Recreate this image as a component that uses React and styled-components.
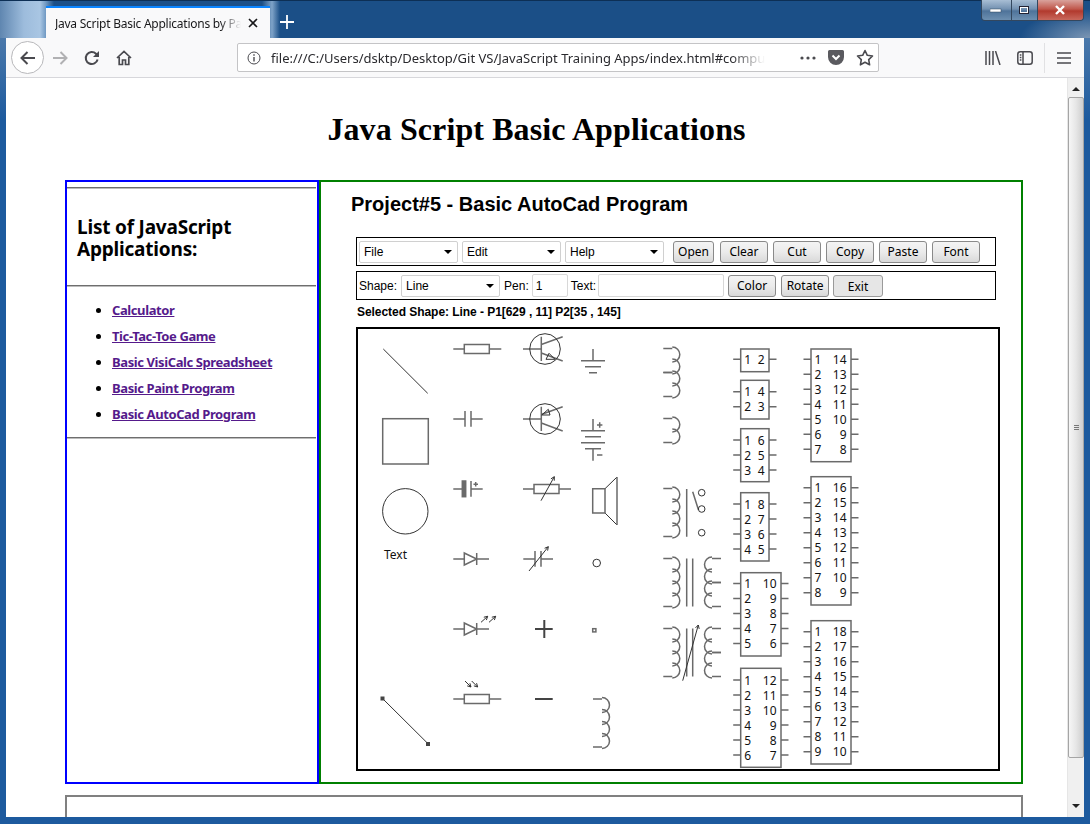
import styled, { createGlobalStyle } from 'styled-components';

const GlobalStyle = createGlobalStyle`
  html, body {
    margin: 0;
    padding: 0;
    height: 100%;
    overflow: hidden;
    background: #1d5a9e;
  }
  * {
    box-sizing: border-box;
  }
`;

const caret = `url("data:image/svg+xml,%3Csvg xmlns='http://www.w3.org/2000/svg' width='8' height='4'%3E%3Cpath d='M0 0h8L4 4z' fill='%23000'/%3E%3C/svg%3E")`;

const Window = styled.div`
  width: 1090px;
  height: 824px;
  display: flex;
  flex-direction: column;
  overflow: hidden;
  background: linear-gradient(#5f86b0, #1d5a9e 120px);
`;

const TitleBar = styled.div`
  height: 38px;
  flex: none;
  display: flex;
  align-items: flex-end;
  padding-left: 46px;
  background:
    radial-gradient(ellipse 70px 30px at 1090px 38px, #7d97b5 0%, rgba(125, 151, 181, 0) 100%),
    linear-gradient(90deg, #5f86b0 0, #9dbcdc 24px, #a9c6e3 40px, #6f98c2 46px, #1b4f87 54px, #1b4f87 262px, #7fa3c8 272px, #1b4f87 280px);
  background-color: #1b4f87;
  border-top: 1px solid #0d2f55;
  position: relative;
`;

const Tab = styled.div`
  width: 224px;
  height: 32px;
  background: #f9f9fa;
  border-top: 2px solid #0a84ff;
  display: flex;
  align-items: center;
  padding: 0 11px 0 9px;
`;

const TabTitle = styled.span`
  flex: 1;
  overflow: hidden;
  white-space: nowrap;
  font: 12px "Noto Sans", sans-serif;
  letter-spacing: -0.25px;
  color: #18181a;
  -webkit-mask-image: linear-gradient(90deg, #000 165px, transparent 186px);
  mask-image: linear-gradient(90deg, #000 165px, transparent 186px);
`;

const NewTab = styled.svg`
  margin: 0 0 9px 10px;
  flex: none;
`;

const WinControls = styled.div`
  position: absolute;
  top: -1px;
  right: 6px;
  width: 103px;
  height: 21px;
  display: flex;
  border: 1px solid #33475e;
  border-top: 0;
  border-radius: 0 0 4px 4px;
  overflow: hidden;
`;

const WinButton = styled.div`
  flex: ${(p) => p.$grow};
  display: flex;
  align-items: center;
  justify-content: center;
  border-right: 1px solid #33475e;
  background: ${(p) =>
    p.$close
      ? 'linear-gradient(#d9a29c, #c0584c 45%, #b23a2e 55%, #c8685c)'
      : 'linear-gradient(#a8bed4, #7391b1 45%, #4e739a 55%, #6d8fb0)'};
  &:last-child {
    border-right: 0;
  }
`;

const Nav = styled.div`
  height: 40px;
  flex: none;
  margin: 0 6px;
  background: #f9f9fa;
  border-bottom: 1px solid #d7d7db;
  display: flex;
  align-items: center;
  padding: 0 4px 0 5px;
`;

const NavButton = styled.div`
  width: ${(p) => (p.$back ? 33 : 32)}px;
  height: 33px;
  flex: none;
  display: flex;
  align-items: center;
  justify-content: center;
  border-radius: 50%;
  background: ${(p) => (p.$back ? '#fff' : 'transparent')};
  border: ${(p) => (p.$back ? '1px solid #b8b8bb' : '0')};
  color: ${(p) => (p.$off ? '#b1b1b3' : '#4a4a4f')};
`;

const UrlBar = styled.div`
  width: 642px;
  height: 29px;
  margin-left: 97px;
  flex: none;
  background: #fff;
  border: 1px solid #c4c4c6;
  border-radius: 2px;
  display: flex;
  align-items: center;
  padding-left: 9px;
  color: #4a4a4f;
`;

const UrlText = styled.span`
  width: 494px;
  margin-left: 10px;
  overflow: hidden;
  white-space: nowrap;
  font: 13px "Noto Sans", sans-serif;
  color: #2a2a2e;
  -webkit-mask-image: linear-gradient(90deg, #000 460px, transparent 494px);
  mask-image: linear-gradient(90deg, #000 460px, transparent 494px);
`;

const UrlIcons = styled.div`
  margin-left: 35px;
  display: flex;
  align-items: center;
  gap: 12px;
`;

const NavRight = styled.div`
  margin-left: auto;
  display: flex;
  align-items: center;
  color: #4a4a4f;
`;

const NavDivider = styled.div`
  width: 1px;
  height: 30px;
  margin: 0 3px;
  background: #e1e1e3;
`;

const Viewport = styled.div`
  flex: 1;
  min-height: 0;
  margin: 0 6px 7px;
  display: flex;
  background: #fff;
`;

const Page = styled.div`
  flex: 1;
  min-width: 0;
  overflow: hidden;
  padding-top: 33px;
`;

const ScrollBar = styled.div`
  width: 17px;
  flex: none;
  background: #f0f0f0;
  display: flex;
  flex-direction: column;
  align-items: center;
  padding-top: 9px;
  border-left: 1px solid #e6e6e6;
`;

const ScrollThumb = styled.div`
  width: 16px;
  height: 661px;
  margin-top: 6px;
  border: 1px solid #a5a5a5;
  border-radius: 2px;
  background: linear-gradient(90deg, #f6f6f6, #e6e6e6 50%, #cfcfcf);
  display: flex;
  align-items: center;
  justify-content: center;
`;

const ScrollArrow = styled.div`
  width: 0;
  height: 0;
  border-left: 4px solid transparent;
  border-right: 4px solid transparent;
  ${(p) => (p.$down ? 'border-top: 4px solid #222; margin-top: 46px;' : 'border-bottom: 4px solid #222;')}
`;

const Heading = styled.h1`
  margin: 0;
  height: 69px;
  font: bold 32px/36px "Liberation Serif", serif;
  letter-spacing: 0.1px;
  color: #000;
  text-align: center;
`;

const Panels = styled.div`
  margin-left: 59px;
  width: 958px;
  height: 604px;
  display: flex;
`;

const Sidebar = styled.aside`
  width: 254px;
  flex: none;
  border: 2px solid #0000ff;
  padding: 5px 1px 0 0;
`;

const Rule = styled.div`
  height: 2px;
  border-top: 1px solid #6e6e6e;
  border-bottom: 1px solid #bcbcbc;
`;

const SideTitle = styled.h3`
  margin: 0;
  height: 96px;
  padding: 27px 10px 0;
  font: bold 19px/22px "Noto Sans", sans-serif;
  letter-spacing: -0.2px;
  color: #000;
`;

const SideList = styled.ul`
  margin: 0;
  height: 150px;
  padding: 10px 0 0 45px;
`;

const SideItem = styled.li`
  height: 26px;
  font: bold 13px/26px "Noto Sans", sans-serif;
  letter-spacing: -0.4px;
  a {
    color: #551a8b;
    text-decoration: underline;
  }
`;

const Main = styled.main`
  flex: 1;
  border: 2px solid #008000;
  padding-left: 30px;
`;

const ProjectTitle = styled.h2`
  margin: 0;
  height: 55px;
  padding-top: 10px;
  font: bold 20px/24px "Liberation Sans", Arial, sans-serif;
  color: #000;
`;

const Toolbar = styled.div`
  width: 640px;
  height: 29px;
  margin: 0 0 5px 5px;
  border: 1px solid #000;
  display: flex;
  align-items: center;
  padding-left: 2px;
  font: 12px "Liberation Sans", Arial, sans-serif;
`;

const Select = styled.select`
  appearance: none;
  width: 99px;
  height: 22px;
  margin-right: ${(p) => p.$gap ?? 4}px;
  padding: 0 0 0 4px;
  border: 1px solid #d0d0d0;
  border-radius: 2px;
  background: #fff ${caret} no-repeat right 5px center;
  font: 12px "Liberation Sans", Arial, sans-serif;
  color: #000;
`;

const Button = styled.button`
  width: ${(p) => p.$w ?? 48}px;
  height: 22px;
  flex: none;
  margin-left: ${(p) => p.$left ?? 5}px;
  margin-top: ${(p) => (p.$flat ? 1 : 0)}px;
  padding: 0;
  border: 1px solid ${(p) => (p.$flat ? '#9a9a9a' : '#8a8a8a')};
  border-radius: 3px;
  background: ${(p) => (p.$flat ? '#e6e6e6' : 'linear-gradient(#f4f4f4, #ebebeb 50%, #d9d9d9)')};
  font: 12px "Noto Sans", sans-serif;
  color: #000;
`;

const FieldLabel = styled.label`
  margin-right: ${(p) => p.$gap ?? 3}px;
`;

const Input = styled.input`
  width: ${(p) => p.$w}px;
  height: 23px;
  flex: none;
  margin-right: 3px;
  padding: 0 3px;
  border: 1px solid #d8d8d8;
  border-radius: 2px;
  font: 12px "Liberation Sans", Arial, sans-serif;
  color: #000;
`;

const Status = styled.div`
  height: 22px;
  margin-left: 6px;
  font: bold 12px/14px "Liberation Sans", Arial, sans-serif;
  letter-spacing: -0.05px;
  color: #000;
`;

const Canvas = styled.svg`
  display: block;
  width: 644px;
  height: 444px;
  margin-left: 5px;
  border: 2px solid #000;
  background: #fff;
  fill: none;
  stroke: #6a6a6a;
  stroke-width: 1.5;
`;

const Thin = styled.g`
  stroke: #333;
  stroke-width: 1;
`;

const Heavy = styled.g`
  stroke: #444;
  stroke-width: 2;
`;

const PinLabel = styled.text`
  font: 12px "Noto Sans", sans-serif;
  fill: #111;
  stroke: none;
`;

const BottomBox = styled.div`
  margin: 11px 0 0 59px;
  width: 958px;
  height: 60px;
  border: 2px solid #808080;
`;

const coil = (x, y, n, dir = 1) => {
  const bx = x + 9 * dir;
  const sweep = dir > 0 ? 1 : 0;
  let d = `M${x} ${y}H${bx}M${x} ${y + n * 12}H${bx}`;
  for (let i = 0; i < n; i++) {
    d += `M${bx} ${y + i * 12 - 1.5}A7.5 7.5 0 0 ${sweep} ${bx} ${y + (i + 1) * 12 + 1.5}`;
  }
  return d;
};

const Resistor = ({ x, y }) => (
  <>
    <path d={`M${x} ${y}h11m25 0h12`} />
    <rect x={x + 11} y={y - 4.5} width={25} height={9} />
  </>
);

const Arrow = ({ x1, y1, x2, y2 }) => {
  const a = Math.atan2(y2 - y1, x2 - x1);
  const s = 4;
  const p1 = [x2 - s * Math.cos(a - 0.5), y2 - s * Math.sin(a - 0.5)];
  const p2 = [x2 - s * Math.cos(a + 0.5), y2 - s * Math.sin(a + 0.5)];
  return <path d={`M${x1} ${y1}L${x2} ${y2}M${p1[0]} ${p1[1]}L${x2} ${y2}L${p2[0]} ${p2[1]}`} />;
};

const Diode = ({ y }) => (
  <path d={`M453.3 ${y}H464.3M464.3 ${y - 6}V${y + 6}L476.7 ${y}ZM476.7 ${y - 6}V${y + 6}M476.7 ${y}H489`} />
);

const Transistor = ({ y, pnp }) => (
  <>
    <path d={`M523 ${y}H541.3M541.3 ${y - 12.3}V${y + 12}M541.3 ${y - 4.5}L562.7 ${y - 12.3}M541.3 ${y + 4}L562.7 ${y + 12}`} />
    <Thin>
      <circle cx={545} cy={y} r={15.3} />
      {pnp ? (
        <path d={`M541.7 ${y - 4}L548.3 ${y - 9.7}L550 ${y - 4}Z`} />
      ) : (
        <path d={`M546 ${y + 10.3}L549 ${y + 4.3}L555 ${y + 10.3}Z`} />
      )}
    </Thin>
  </>
);

const Transformer = ({ y }) => (
  <>
    <path d={coil(663.3, y, 4)} />
    <path d={coil(721, y, 2, -1)} />
    <path d={coil(721, y + 24, 2, -1)} />
    <path d={`M686.7 ${y}V${y + 48}M692.7 ${y}V${y + 48}`} />
  </>
);

const chips = [
  { x: 740.7, w: 28.3, top: 349, h: 22.7, first: 359.3, pins: 2 },
  { x: 740.7, w: 28.3, top: 380.3, h: 38.7, first: 391.7, pins: 4 },
  { x: 740.7, w: 28.3, top: 428.7, h: 53, first: 440, pins: 6 },
  { x: 740.7, w: 28.3, top: 492.7, h: 68.3, first: 504, pins: 8 },
  { x: 740.7, w: 40.3, top: 572.7, h: 83.3, first: 583.5, pins: 10 },
  { x: 740.7, w: 40.3, top: 668.3, h: 99, first: 680, pins: 12 },
  { x: 811, w: 40, top: 349, h: 112.7, first: 359.3, pins: 14 },
  { x: 811, w: 40, top: 476.7, h: 128.3, first: 487.7, pins: 16 },
  { x: 811, w: 40, top: 620.7, h: 143.3, first: 631.7, pins: 18 },
];

const Chip = ({ x, w, top, h, first, pins }) => {
  const rows = Array.from({ length: pins / 2 }, (_, i) => i);
  return (
    <>
      <rect x={x} y={top} width={w} height={h} />
      {rows.map((i) => {
        const y = first + i * 15;
        return (
          <g key={i}>
            <path d={`M${x - 7.5} ${y}h7.5M${x + w} ${y}h7.5`} />
            <PinLabel x={x + 3.5} y={y + 4.5}>{i + 1}</PinLabel>
            <PinLabel x={x + w - 4.5} y={y + 4.5} textAnchor="end">{pins - i}</PinLabel>
          </g>
        );
      })}
    </>
  );
};

const Schematic = () => (
  <Canvas viewBox="358 329 640 440">
    <Thin>
      <path d="M383.3 349L427.7 393.3" />
      <circle cx={405.3} cy={511.3} r={22.7} />
      <path d="M382.7 698.7L428 743.7" />
      <path d="M605 488.7L617 477M605 513L617 525" />
    </Thin>
    <rect x={382.7} y={418.7} width={45.6} height={45.3} />
    <Heavy>
      <rect x={381.5} y={697.5} width={2} height={2} />
      <rect x={427} y={743} width={2} height={2} />
      <path d="M535 629H552.7M544.3 620V638M535 699H552.7" />
    </Heavy>
    <PinLabel x={384} y={559}>Text</PinLabel>

    <Resistor x={453.3} y={349} />
    <path d="M453.3 419H465M465 411V426.7M471 411V426.7M471 419H482.7" />
    <path d="M453.3 489H463M471 481V496.7M471 489H482.7M473.5 484.3H478M475.7 482V486.5" />
    <rect x={462.3} y={481} width={3.4} height={15.7} fill="#6a6a6a" />
    <Diode y={559} />
    <Diode y={629} />
    <Thin>
      <Arrow x1={481} y1={622.3} x2={487.7} y2={616.3} />
      <Arrow x1={489} y1={622.3} x2={495.7} y2={616.3} />
      <Arrow x1={465} y1={681} x2={471} y2={687} />
      <Arrow x1={471.7} y1={681} x2={477.7} y2={687} />
    </Thin>
    <Resistor x={453.3} y={699} />

    <Transistor y={349} />
    <Transistor y={419} pnp />
    <Resistor x={523} y={489} />
    <path d="M523.3 559H535M535 551V566.7M541 551V566.7M541 559H553" />
    <Thin>
      <Arrow x1={541} y1={500.7} x2={554.3} y2={476.7} />
      <Arrow x1={529} y1={571} x2={548.3} y2={546.7} />
    </Thin>

    <path d="M593 349V360.7M581 360.7H605M585 366.7H601M589 372.7H597" />
    <path d="M593 419V430.7M581 430.7H605M585 436.7H601M581 442.7H605M585 448.7H601M593 448.7V460.7M597 425H602.4M599.7 422.3V427.7M597 455H602.4" />
    <path d="M592.7 488.7H605V513H592.7ZM617 477V525" />
    <Thin>
      <circle cx={596.7} cy={563} r={3.8} />
    </Thin>
    <rect x={592.7} y={628.7} width={3.2} height={3.2} />
    <path d={coil(593, 699, 4)} />

    <path d={coil(663.3, 348.5, 2)} />
    <path d={coil(663.3, 372.5, 2)} />
    <path d={coil(663.3, 418.5, 2)} />
    <path d={coil(663.3, 488.5, 4)} />
    <path d="M686.7 489V536.7M692.7 491.7L698.5 510" />
    <Thin>
      <circle cx={701.7} cy={492.7} r={3.3} />
      <circle cx={701.7} cy={509} r={3.3} />
      <circle cx={701.7} cy={532.7} r={3.3} />
    </Thin>
    <Transformer y={558.5} />
    <Transformer y={628.5} />
    <Thin>
      <Arrow x1={682.7} y1={680.7} x2={698.3} y2={625} />
    </Thin>

    {chips.map((c) => (
      <Chip key={c.pins} {...c} />
    ))}
  </Canvas>
);

const apps = [
  'Calculator',
  'Tic-Tac-Toe Game',
  'Basic VisiCalc Spreadsheet',
  'Basic Paint Program',
  'Basic AutoCad Program',
];

export default function App() {
  return (
    <Window>
      <GlobalStyle />
      <TitleBar>
        <Tab>
          <TabTitle>Java Script Basic Applications by Pa</TabTitle>
          <svg width="12" height="12" viewBox="0 0 12 12" stroke="#18181a" strokeWidth="1.6" fill="none">
            <path d="M2 2l8 8M10 2l-8 8" />
          </svg>
        </Tab>
        <NewTab width="14" height="14" viewBox="0 0 14 14" stroke="#fff" strokeWidth="1.8" fill="none">
          <path d="M7 0v14M0 7h14" />
        </NewTab>
        <WinControls>
          <WinButton $grow={30}>
            <svg width="12" height="5"><rect y="1" width="11" height="3" fill="#fff" stroke="#33475e" strokeWidth="0.5" /></svg>
          </WinButton>
          <WinButton $grow={26}>
            <svg width="12" height="10" fill="none"><rect x="1.5" y="1.5" width="9" height="7" stroke="#223" strokeWidth="1" /><rect x="2.5" y="2.5" width="7" height="5" stroke="#fff" strokeWidth="1" /></svg>
          </WinButton>
          <WinButton $grow={47} $close>
            <svg width="12" height="10" stroke="#fff" strokeWidth="2.4" fill="none"><path d="M2 1l8 8M10 1l-8 8" /></svg>
          </WinButton>
        </WinControls>
      </TitleBar>

      <Nav>
        <NavButton $back>
          <svg width="18" height="18" viewBox="0 0 18 18" stroke="currentColor" strokeWidth="2" fill="none">
            <path d="M16 9H2.5M8.5 3L2.5 9l6 6" />
          </svg>
        </NavButton>
        <NavButton $off>
          <svg width="18" height="18" viewBox="0 0 18 18" stroke="currentColor" strokeWidth="2" fill="none">
            <path d="M2 9h13.5M9.5 3l6 6-6 6" />
          </svg>
        </NavButton>
        <NavButton>
          <svg width="16" height="16" viewBox="0 0 16 16" stroke="currentColor" strokeWidth="2" fill="none">
            <path d="M13.6 9.5A6 6 0 1 1 12 3.8L14 6" />
            <path d="M15 1v6H9z" fill="currentColor" stroke="none" />
          </svg>
        </NavButton>
        <NavButton>
          <svg width="16" height="16" viewBox="0 0 16 16" stroke="currentColor" strokeWidth="1.7" fill="none">
            <path d="M1 8l7-6.5L15 8M3.2 7v7.5h3.3V10h3v4.5h3.3V7" />
          </svg>
        </NavButton>
        <UrlBar>
          <svg width="14" height="14" viewBox="0 0 14 14" stroke="currentColor" fill="none">
            <circle cx="7" cy="7" r="6" />
            <path d="M7 6v4.5M7 3.2v1.6" strokeWidth="1.4" />
          </svg>
          <UrlText>file:///C:/Users/dsktp/Desktop/Git VS/JavaScript Training Apps/index.html#compu</UrlText>
          <UrlIcons>
            <svg width="16" height="4" viewBox="0 0 16 4" fill="currentColor">
              <circle cx="2" cy="2" r="1.6" />
              <circle cx="8" cy="2" r="1.6" />
              <circle cx="14" cy="2" r="1.6" />
            </svg>
            <svg width="16" height="15" viewBox="0 0 16 15">
              <path d="M1.5 0h13A1.5 1.5 0 0 1 16 1.5V7a8 8 0 0 1-16 0V1.5A1.5 1.5 0 0 1 1.5 0z" fill="#5a5a5f" />
              <path d="M4.5 5.5L8 9l3.5-3.5" stroke="#fff" strokeWidth="2" fill="none" />
            </svg>
            <svg width="18" height="17" viewBox="0 0 18 17" stroke="currentColor" strokeWidth="1.6" fill="none">
              <path d="M9 1.5l2.3 4.8 5.2.7-3.8 3.6.9 5.2L9 13.3l-4.6 2.5.9-5.2L1.5 7l5.2-.7z" strokeLinejoin="round" />
            </svg>
          </UrlIcons>
        </UrlBar>
        <NavRight>
          <NavButton>
            <svg width="16" height="14" viewBox="0 0 16 14" stroke="currentColor" strokeWidth="1.5" fill="none">
              <path d="M1 0v14M4.5 0v14M8 0v14M10.5 0l4.5 14" />
            </svg>
          </NavButton>
          <NavButton>
            <svg width="16" height="14" viewBox="0 0 16 14" stroke="currentColor" strokeWidth="1.5" fill="none">
              <rect x="0.8" y="0.8" width="14.4" height="12.4" rx="2.5" />
              <path d="M6 1v12M2.8 4h1.6M2.8 6.5h1.6M2.8 9h1.6" />
            </svg>
          </NavButton>
          <NavDivider />
          <NavButton>
            <svg width="14" height="14" viewBox="0 0 14 14" stroke="currentColor" strokeWidth="1.6" fill="none">
              <path d="M0 2h14M0 7h14M0 12h14" />
            </svg>
          </NavButton>
        </NavRight>
      </Nav>

      <Viewport>
        <Page>
          <Heading>Java Script Basic Applications</Heading>
          <Panels>
            <Sidebar>
              <Rule />
              <SideTitle>List of JavaScript Applications:</SideTitle>
              <Rule />
              <SideList>
                {apps.map((name) => (
                  <SideItem key={name}>
                    <a href="#app">{name}</a>
                  </SideItem>
                ))}
              </SideList>
              <Rule />
            </Sidebar>
            <Main>
              <ProjectTitle>Project#5 - Basic AutoCad Program</ProjectTitle>
              <Toolbar>
                <Select><option>File</option></Select>
                <Select><option>Edit</option></Select>
                <Select $gap={4}><option>Help</option></Select>
                <Button $w={41} $left={5}>Open</Button>
                <Button $left={6}>Clear</Button>
                <Button>Cut</Button>
                <Button>Copy</Button>
                <Button>Paste</Button>
                <Button>Font</Button>
              </Toolbar>
              <Toolbar>
                <FieldLabel $gap={4}>Shape:</FieldLabel>
                <Select><option>Line</option></Select>
                <FieldLabel $gap={3}>Pen:</FieldLabel>
                <Input $w={36} defaultValue="1" />
                <FieldLabel $gap={2}>Text:</FieldLabel>
                <Input $w={126} />
                <Button $left={1}>Color</Button>
                <Button>Rotate</Button>
                <Button $w={50} $left={4} $flat>Exit</Button>
              </Toolbar>
              <Status>Selected Shape: Line - P1[629 , 11] P2[35 , 145]</Status>
              <Schematic />
            </Main>
          </Panels>
          <BottomBox />
        </Page>
        <ScrollBar>
          <ScrollArrow />
          <ScrollThumb>
            <svg width="7" height="7" stroke="#777" fill="none"><path d="M1 1.5h5M1 3.5h5M1 5.5h5" /></svg>
          </ScrollThumb>
          <ScrollArrow $down />
        </ScrollBar>
      </Viewport>
    </Window>
  );
}
